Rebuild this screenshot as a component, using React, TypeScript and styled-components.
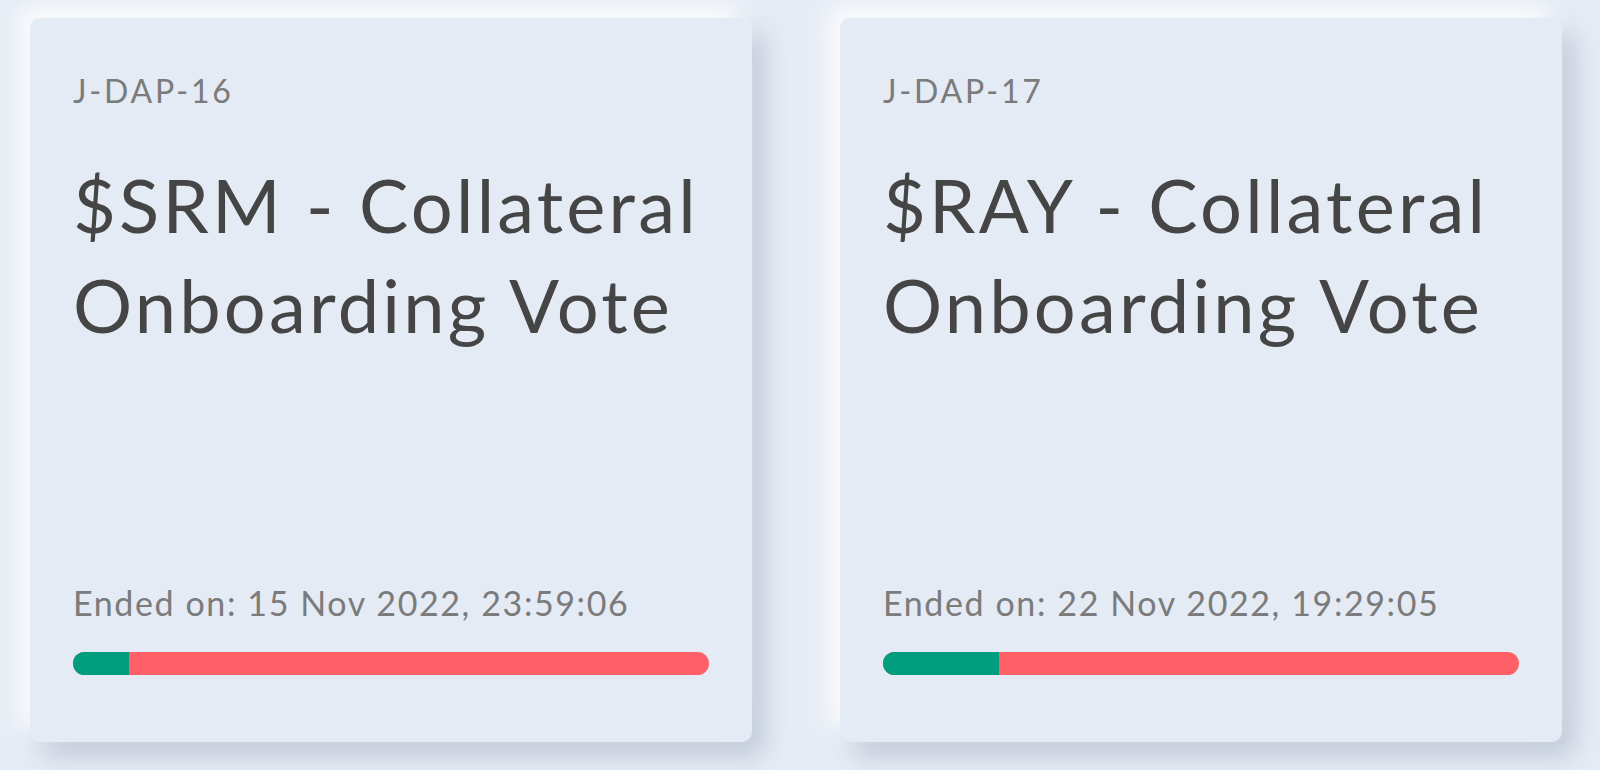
import styled, { createGlobalStyle } from "styled-components";

const GlobalStyle = createGlobalStyle`
  html, body {
    margin: 0;
    padding: 0;
    background: #e6ecf5;
    font-family: "Lato", "Noto Sans", sans-serif;
  }
`;

type Proposal = {
  id: string;
  title: string;
  endedOn: string;
  yes: number;
};

const proposals: Proposal[] = [
  {
    id: "J-DAP-16",
    title: "$SRM - Collateral Onboarding Vote",
    endedOn: "15 Nov 2022, 23:59:06",
    yes: 8.85,
  },
  {
    id: "J-DAP-17",
    title: "$RAY - Collateral Onboarding Vote",
    endedOn: "22 Nov 2022, 19:29:05",
    yes: 18.3,
  },
];

const Page = styled.div`
  width: 1600px;
  height: 770px;
  overflow: hidden;
  box-sizing: border-box;
  padding: 18px 0 0 30px;
  display: grid;
  grid-template-columns: repeat(3, 722px);
  grid-auto-rows: 724px;
  column-gap: 88px;
`;

const Card = styled.div`
  box-sizing: border-box;
  display: flex;
  flex-direction: column;
  padding: 53px 43px 67px;
  background: #e4ebf5;
  border-radius: 10px;
  box-shadow: -12px -12px 24px rgba(255, 255, 255, 0.85),
    12px 14px 26px rgba(160, 172, 190, 0.55);
`;

const ProposalId = styled.div`
  font-size: 32px;
  line-height: 40px;
  color: #7b7b7b;
  letter-spacing: 2.8px;
`;

const Title = styled.h2`
  margin: 44px 0 0;
  font-size: 74px;
  font-weight: 400;
  line-height: 100px;
  color: #454545;
  letter-spacing: 3.2px;
`;

const Footer = styled.div`
  margin-top: auto;
  display: flex;
  flex-direction: column;
  gap: 29px;
`;

const EndedOn = styled.div`
  font-size: 34px;
  line-height: 40px;
  color: #7b7b7b;
  letter-spacing: 1.6px;
`;

const Bar = styled.div`
  height: 23px;
  border-radius: 12px;
  background: #ff5f66;
  overflow: hidden;
  display: flex;
`;

const YesPart = styled.div`
  height: 100%;
  background: #009e7f;
`;

function ProposalCard({ id, title, endedOn, yes }: Proposal) {
  return (
    <Card>
      <ProposalId>{id}</ProposalId>
      <Title>{title}</Title>
      <Footer>
        <EndedOn>Ended on: {endedOn}</EndedOn>
        <Bar>
          <YesPart style={{ width: `${yes}%` }} />
        </Bar>
      </Footer>
    </Card>
  );
}

export default function App() {
  return (
    <>
      <GlobalStyle />
      <Page>
        {proposals.map((p) => (
          <ProposalCard {...p} key={p.id} />
        ))}
      </Page>
    </>
  );
}
